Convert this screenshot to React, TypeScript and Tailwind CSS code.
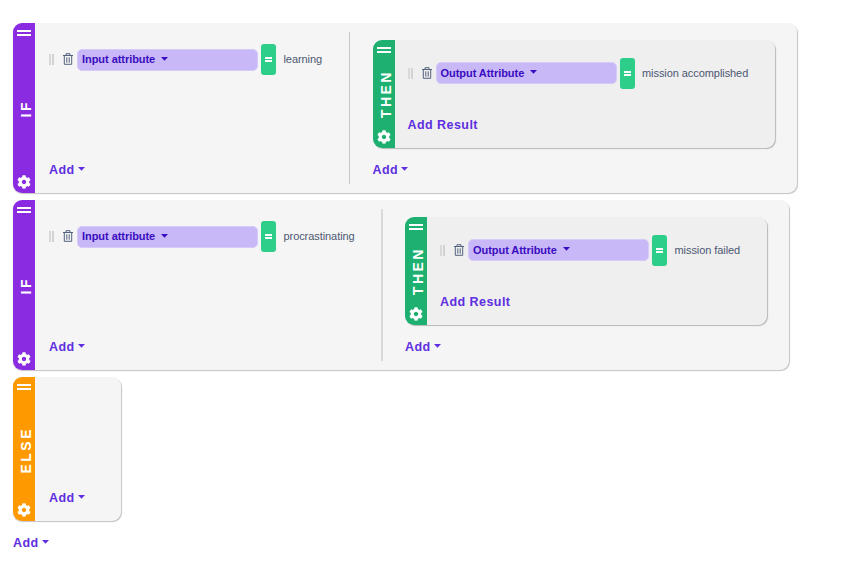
import React from "react";
import { FaCog } from "react-icons/fa";

function Caret({ className = "" }: { className?: string }) {
  return (
    <svg className={"h-[4px] w-[7px] shrink-0 " + className} viewBox="0 0 7 4">
      <path d="M0 0H7L3.5 3.7Z" fill="currentColor" />
    </svg>
  );
}

function Rail({ label, color, shift }: { label: string; color: string; shift: string }) {
  return (
    <div className={`flex w-[22px] shrink-0 flex-col items-center rounded-l-[9px] pt-[7px] pb-[4px] ${color}`}>
      <div className="flex h-[6px] w-[14px] flex-col justify-between">
        <i className="h-[2px] bg-white" />
        <i className="h-[2px] bg-white" />
      </div>
      <div className={`flex flex-1 items-center pl-[4px] ${shift}`}>
        <span className="rotate-180 text-[14px] leading-[16px] font-bold tracking-[2.5px] text-white [writing-mode:vertical-rl]">
          {label}
        </span>
      </div>
      <FaCog className="size-[14px] text-white" />
    </div>
  );
}

function Trash() {
  return (
    <svg className="-mt-px ml-[9px] h-[12px] w-[10px] shrink-0" viewBox="0 0 10 12" fill="none" stroke="#53627c">
      <path d="M0 2.5H10M3 2.5V0.7H7V2.5M1.3 2.5V11.3H8.7V2.5" />
      <path d="M3.8 4.3V9.7M6.2 4.3V9.7" />
    </svg>
  );
}

function Condition({ name, value }: { name: string; value: string }) {
  return (
    <div className="flex h-[31px] items-center">
      <div className="flex h-[11px] w-[5px] shrink-0 justify-between">
        <i className="w-[2px] bg-[#d8d8d8]" />
        <i className="w-[2px] bg-[#d2d2d2]" />
      </div>
      <Trash />
      <div className="ml-[4px] flex h-[22px] w-[181px] shrink-0 items-center rounded-[5px] border border-[#d5caf8] bg-[#c8b8f7] pl-[4px] text-[11px] font-bold tracking-[-0.05px] text-[#3a0cc0]">
        {name}
        <Caret className="-mt-[2px] ml-[6px]" />
      </div>
      <div className="ml-[3px] flex h-[31px] w-[15px] shrink-0 flex-col items-center justify-center gap-[1px] rounded-[3px] bg-[#2dce89]">
        <i className="h-[2px] w-[7px] bg-white" />
        <i className="h-[2px] w-[7px] bg-white" />
      </div>
      <span className="ml-[7.5px] text-[11px] tracking-[-0.07px] whitespace-nowrap text-[#4c5872]">{value}</span>
    </div>
  );
}

function Add() {
  return (
    <button className="flex h-[16px] items-center text-[12.5px] leading-[16px] font-bold tracking-[0.45px] text-[#5e2ee0]">
      Add
      <Caret className="-mt-[2px] ml-[3px]" />
    </button>
  );
}

type RuleProps = {
  left: string;
  input: string;
  output: string;
  width: string;
  resultWidth: string;
  divider: string;
  resultPad: string;
};

function Rule({ left, input, output, width, resultWidth, divider, resultPad }: RuleProps) {
  return (
    <section className={`flex h-[169.5px] rounded-[9px] bg-[#f5f5f5] shadow-[0.5px_1px_1px_#c4c4c4] ${width}`}>
      <Rail label="IF" color="bg-[#8a2be2]" shift="pt-[6px]" />
      <div className={`my-[9px] flex shrink-0 flex-col justify-between pt-[12px] pb-[6px] pl-[14px] ${left}`}>
        <Condition name="Input attribute" value={input} />
        <Add />
      </div>
      <div className={`my-[9px] shrink-0 ${divider}`} />
      <div className={`flex flex-col pt-[17px] ${resultPad}`}>
        <div className={`flex h-[108px] rounded-[9px] bg-[#efefef] shadow-[1px_1px_1px_#b8b8b8] ${resultWidth}`}>
          <Rail label="THEN" color="bg-[#1db070]" shift="pt-[5px]" />
          <div className="flex flex-col pt-[17.5px] pl-[13px]">
            <Condition name="Output Attribute" value={output} />
            <button className="mt-[28px] text-left text-[12.5px] leading-[16px] font-bold tracking-[0.45px] text-[#5e2ee0]">
              Add Result
            </button>
          </div>
        </div>
        <div className="mt-[14px]">
          <Add />
        </div>
      </div>
    </section>
  );
}

export default function App() {
  return (
    <main className="flex h-[567px] w-[850px] flex-col gap-[7.5px] overflow-hidden bg-white pt-[23px] pl-[13px] font-['Liberation_Sans',Arial,sans-serif]">
      <Rule
        left="w-[314px]"
        input="learning"
        output="mission accomplished"
        width="w-[784px]"
        resultWidth="w-[402.5px]"
        divider="w-px bg-[#c8c8c8]"
        resultPad="pl-[22.5px]"
      />
      <Rule
        left="w-[346px]"
        input="procrastinating"
        output="mission failed"
        width="w-[776px]"
        resultWidth="w-[362px]"
        divider="w-[2px] bg-[#dadada]"
        resultPad="pl-[22px]"
      />
      <section className="flex h-[144px] w-[108px] rounded-[9px] bg-[#f5f5f5] shadow-[0.5px_1px_1px_#c4c4c4]">
        <Rail label="ELSE" color="bg-[#ff9900]" shift="pt-[8px]" />
        <div className="flex items-end pb-[15px] pl-[14px]">
          <Add />
        </div>
      </section>
      <div className="mt-[6px]">
        <Add />
      </div>
    </main>
  );
}
